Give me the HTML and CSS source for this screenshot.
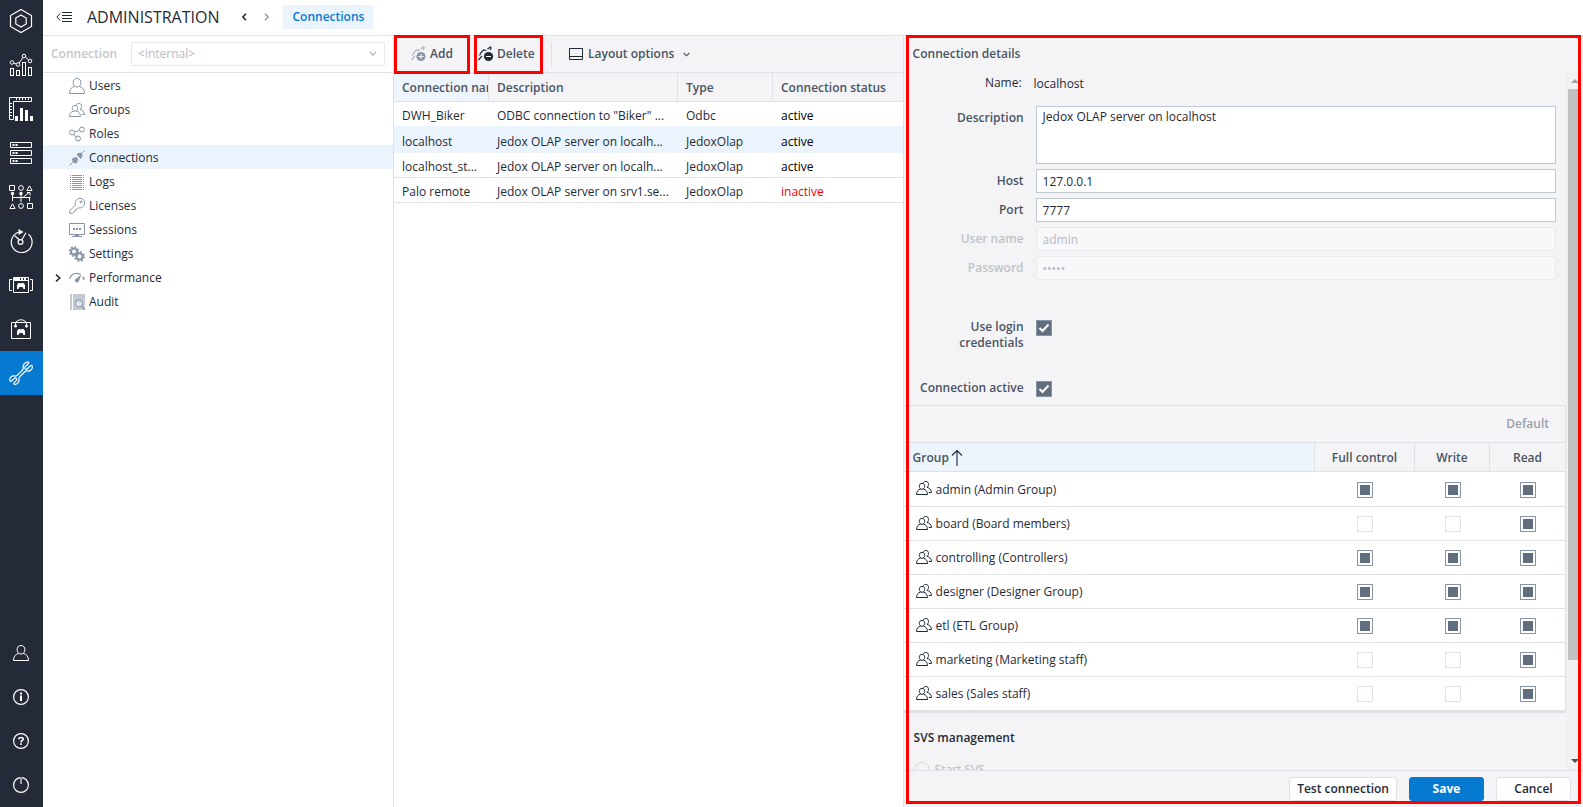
FILE: index.html
```html
<!DOCTYPE html>
<html lang="en">
<head>
<meta charset="utf-8">
<title>Administration - Connections</title>
<link rel="stylesheet" href="styles.css">
</head>
<body>
<svg class="defs" aria-hidden="true">
  <symbol id="i-group" viewBox="0 0 16 14">
    <g fill="none" stroke="currentColor" stroke-width="1">
      <path d="M6 2.400c2 0 2.700 1.300 2.700 2.900S7.700 8.300 6 8.300 3.300 6.900 3.300 5.300 4 2.400 6 2.400z"/>
      <path d="M4.600 8C2.200 8.700.6 10.300.5 13.500h11C11.400 10.300 9.800 8.700 7.400 8"/>
      <path d="M7.200 2.100C7.600 1 8.500.5 9.800.5c2 0 2.700 1.300 2.700 2.900 0 1.500-.6 2.500-1.600 2.900 2.500.7 4.400 2.200 4.600 5.200h-2.700"/>
    </g>
  </symbol>
  <symbol id="i-user" viewBox="0 0 16 16">
    <g fill="none" stroke="currentColor" stroke-width="1">
      <path d="M8 .5c2.600 0 3.900 1.800 3.900 4.200S10.400 9 8 9 4.100 7.100 4.100 4.700 5.400.5 8 .5z"/>
      <path d="M5.600 8.500C2.500 9.200.5 11.500.5 15.500h15c0-4-2-6.300-5.100-7"/>
    </g>
  </symbol>
  <symbol id="i-chev" viewBox="0 0 8 5"><path d="M.8.8 4 4 7.200.8" fill="none" stroke="currentColor" stroke-width="1.300"/></symbol>
</svg>
<div class="app">
  <nav class="rail" aria-label="Modules">
    <a class="rail-item first" href="#" aria-label="Home"><svg width="24" height="26" viewBox="0 0 24 26"><g fill="none" stroke="currentColor" stroke-width="1.200"><path d="M12 1.500 22.500 7.500v11L12 24.500 1.500 18.500v-11z"/><path d="M12 7 17.200 10v6L12 19 6.800 16v-6z"/></g></svg></a>
    <a class="rail-item" href="#" aria-label="Dashboards"><svg width="24" height="24" viewBox="0 0 24 24"><g fill="none" stroke="currentColor" stroke-width="1"><rect x="1.500" y="15.500" width="3" height="7"/><rect x="7.500" y="17.500" width="3" height="5"/><rect x="13.500" y="9.500" width="3" height="13"/><rect x="19.500" y="14.500" width="3" height="8"/><circle cx="3" cy="9.500" r="1.800"/><circle cx="9" cy="11.500" r="1.800"/><circle cx="15" cy="3" r="1.800"/><circle cx="21" cy="8" r="1.800"/><path d="M4.800 10.100l2.400.8M10 10l4-5.400M16.500 4.200l3 2.600"/></g></svg></a>
    <a class="rail-item" href="#" aria-label="Reports"><svg width="24" height="24" viewBox="0 0 24 24"><path d="M.5.500h22v4h-18v18h-4z" fill="none" stroke="currentColor"/><path d="M7.500 1v2M10.500 1v2M13.500 1v2M16.500 1v2M19.500 1v2M1 6.500h2M1 9.500h2M1 12.500h2M1 15.500h2M1 18.500h2" stroke="currentColor"/><path d="M6 19h3v5H6zM11 11h3v13h-3zM16 13h3v11h-3zM21 19h3v5h-3z" fill="currentColor"/></svg></a>
    <a class="rail-item" href="#" aria-label="Modeler"><svg width="24" height="24" viewBox="0 0 24 24"><g fill="none" stroke="currentColor"><path d="M1.500 1.500h21v5h-21zM1.500 9.500h21v5h-21zM1.500 17.500h21v5h-21z"/><path d="M3.500 4h2M6.500 4h2M3.500 12h2M6.500 12h2M3.500 20h2M6.500 20h2" stroke-width="2"/></g></svg></a>
    <a class="rail-item" href="#" aria-label="Integrator"><svg width="24" height="24" viewBox="0 0 24 24"><g fill="none" stroke="currentColor"><path d="M.5.500h5v5h-5zM18.500 18.500h5v5h-5zM20.500.8l2.600 4.700h-5.200zM3.500 18.800l2.600 4.700H.9z"/><circle cx="12" cy="3" r="2.400"/><circle cx="12" cy="21" r="2.400"/><path d="M3.500 7v9M12 7v10M4 12.500h17.500M20.500 12.500v4M14 12.500l6-5"/><path d="M18 7.500h3v3" /></g><g fill="currentColor"><circle cx="3.500" cy="8.500" r="1.700"/><circle cx="12" cy="8.500" r="1.700"/></g></svg></a>
    <a class="rail-item" href="#" aria-label="Scheduler"><svg width="24" height="24" viewBox="0 0 24 24"><g fill="none" stroke="currentColor" stroke-width="1.200"><path d="M19.500 5.300A10.400 10.400 0 1 1 10.500 3"/><circle cx="11.500" cy="13" r="2.400"/><path d="M10.300 10.800 5.500 6.500M12.800 10.800l4.200-7"/></g><path d="M9.500 0l5 3-5 3z" fill="currentColor"/></svg></a>
    <a class="rail-item" href="#" aria-label="Marketplace"><svg width="24" height="18" viewBox="0 0 24 18"><g fill="none" stroke="currentColor"><path d="M4.500 1.500h15v15h-15zM4.500 4.500h15"/><path d="M3 3.500H.5v11H3M21 3.500h2.500v11H21"/></g><path d="M5 2h6v2H5zM12 2h2v2h-2zM15 2h2v2h-2zM8 13V9l1.500-2h2l.5 1 .5-1h2L16 9v4h-1.500l-1-2h-3l-1 2z" fill="currentColor"/></svg></a>
    <a class="rail-item" href="#" aria-label="Store"><svg width="22" height="22" viewBox="0 0 22 22"><g fill="none" stroke="currentColor"><path d="M1.500 4.500h19v16h-19z"/><path d="M5.500 8V6c0-5.600 11-5.600 11 0v2"/></g><g fill="currentColor"><circle cx="5.500" cy="8" r="1.500"/><circle cx="16.500" cy="8" r="1.500"/><path d="M7 17v-4l1.500-2h2l.5 1 .5-1h2L15 13v4h-1.500l-1-2h-3l-1 2z"/></g></svg></a>
    <a class="rail-item active" href="#" aria-label="Administration" aria-current="page"><svg width="24" height="24" viewBox="0 0 24 24"><path d="M18.500 3.500l-2.400 2.400c-1 1 .9 3.300 2.100 2.100l3.300-3.500c1.700-.3 1.800.5 1.800 1.700 0 2.700-2.500 4.300-5.200 3.800-1.200-.2-1.800.2-2.600 1l-4.600 4.600c-.8.800-1.200 1.400-.9 2.600.6 2.600-1.100 5.100-3.800 5.100-1.500 0-1.700-1-1-1.700l2.300-2.300c1-1-1-3.200-2.200-2L3 19.700c-1.400 1.400-2.200.3-2.200-1C.8 16 3.300 14.400 5.900 15c1.200.3 1.800 0 2.600-.8l4.800-4.800c.8-.8 1.100-1.500.9-2.600C13.700 3.900 15.700 1 18.700 1c1.300 0 1.500.9-.2 2.500z" fill="none" stroke="currentColor" stroke-width="1.200"/></svg></a>
    <span class="rail-space"></span>
    <a class="rail-item" href="#" aria-label="Profile"><svg width="16" height="16"><use href="#i-user"/></svg></a>
    <a class="rail-item" href="#" aria-label="Information"><svg width="16" height="16" viewBox="0 0 16 16"><circle cx="8" cy="8" r="7.400" fill="none" stroke="currentColor" stroke-width="1.200"/><path d="M7 3.500h2v2H7zM7 6.500h2V12H7z" fill="currentColor"/></svg></a>
    <a class="rail-item" href="#" aria-label="Help"><svg width="16" height="16" viewBox="0 0 16 16"><circle cx="8" cy="8" r="7.400" fill="none" stroke="currentColor" stroke-width="1.200"/><path d="M5.800 6.200C5.800 3.900 10.400 4 10.200 6.200 10.100 7.500 8 7.500 8 9.400M8 10.300V12" fill="none" stroke="currentColor" stroke-width="1.600"/></svg></a>
    <a class="rail-item" href="#" aria-label="Log out"><svg width="16" height="16" viewBox="0 0 16 16"><circle cx="8" cy="8" r="7.400" fill="none" stroke="currentColor" stroke-width="1.200"/><path d="M8 0v7" stroke="#9ba0a8" stroke-width="2"/></svg></a>
  </nav>

  <div class="main">
    <header class="topbar">
      <button class="icon-btn menu" aria-label="Collapse menu"><svg width="16" height="12" viewBox="0 0 16 12"><path d="M6 1.500h10M6 4.500h10M6 7.500h10M6 10.500h10M4.200 2.500.9 6l3.300 3.500" fill="none" stroke="currentColor"/></svg></button>
      <h1>ADMINISTRATION</h1>
      <button class="icon-btn back" aria-label="Back"><svg width="5" height="8" viewBox="0 0 5 8"><path d="M4 .8.9 4 4 7.200" fill="none" stroke="currentColor" stroke-width="1.500"/></svg></button>
      <button class="icon-btn fwd" aria-label="Forward"><svg width="5" height="8" viewBox="0 0 5 8"><path d="M1 .8 4.100 4 1 7.200" fill="none" stroke="currentColor" stroke-width="1.300"/></svg></button>
      <a class="crumb" href="#">Connections</a>
    </header>

    <div class="content">
      <aside class="tree-panel">
        <div class="conn-bar">
          <label for="conn">Connection</label>
          <span class="select-wrap">
            <select id="conn" disabled><option>&lt;internal&gt;</option></select>
            <svg width="8" height="5"><use href="#i-chev"/></svg>
          </span>
        </div>
        <ul class="tree">
          <li><a href="#"><svg width="16" height="16"><use href="#i-user"/></svg>Users</a></li>
          <li><a href="#"><svg width="16" height="14"><use href="#i-group"/></svg>Groups</a></li>
          <li><a href="#"><svg width="16" height="16" viewBox="0 0 16 16"><g fill="none" stroke="currentColor"><circle cx="3" cy="6.500" r="2.500"/><circle cx="13" cy="3.500" r="2.500"/><circle cx="9" cy="12.500" r="2.500"/><path d="M5.500 6l5-1.600M4.500 8.500l2.800 2.400"/></g></svg>Roles</a></li>
          <li class="selected"><a href="#"><svg width="16" height="16" viewBox="0 0 16 16"><path d="M.5 15.500 6 10M10 6 15.500.5" stroke="currentColor"/><path d="M3 9l2-2 .8 1L7 6.800l2.300 2.300L8.200 10.300l.8.700-1.800 2.200-1.400.3-2.600-2.700zM7.500 4.500l2-1.500 2-.5 2 2-.3 2.200L11.700 9z" fill="currentColor"/></svg>Connections</a></li>
          <li><a href="#"><svg width="16" height="16" viewBox="0 0 16 16"><path d="M3 1.500h10M3 3.500h10M3 5.500h10M3 7.500h10M3 9.500h10M3 11.500h10M3 13.500h10M3 15.500h10M1 1.500h1M1 3.500h1M1 5.500h1M1 7.500h1M1 9.500h1M1 11.500h1M1 13.500h1M1 15.500h1M14 1.500h1M14 3.500h1M14 5.500h1M14 7.500h1M14 9.500h1M14 11.500h1M14 13.500h1M14 15.500h1" stroke="currentColor"/></svg>Logs</a></li>
          <li><a href="#"><svg width="16" height="16" viewBox="0 0 16 16"><g fill="none" stroke="currentColor"><path d="M6.500 7C5.400 3.500 7.500.5 11 .5s4.500 2 4.500 4.500c0 3.500-3 5.500-6 4.800L8 11.200l-1.500.3-.3 1.500L3.500 15.200l-2.700.3L.5 13z"/><circle cx="12" cy="4" r="1"/></g></svg>Licenses</a></li>
          <li><a href="#"><svg width="16" height="16" viewBox="0 0 16 16"><path d="M.5 1.500h15v11H.5z" fill="none" stroke="currentColor"/><path d="M4 6h2v2H4zM7 6h2v2H7zM10 6h2v2h-2zM6 13h4v1H6zM3 14h10v1H3z" fill="currentColor"/></svg>Sessions</a></li>
          <li><a href="#"><svg width="16" height="16" viewBox="0 0 16 16"><g fill="none" stroke="currentColor"><circle cx="5" cy="5.500" r="3" stroke-width="2"/><circle cx="5" cy="5.500" r="4.600" stroke-width="1.600" stroke-dasharray="1.800 1.800"/><circle cx="10.500" cy="10.500" r="3" stroke-width="2.200"/><circle cx="10.500" cy="10.500" r="4.700" stroke-width="1.600" stroke-dasharray="1.850 1.850"/></g></svg>Settings</a></li>
          <li><a href="#" class="expandable"><svg class="twist" width="6" height="8" viewBox="0 0 6 8"><path d="M1 .6 4.800 4 1 7.400" fill="none" stroke="currentColor" stroke-width="1.500"/></svg><svg width="16" height="16" viewBox="0 0 16 16"><path d="M.7 9C1.500 5.200 4.200 3.300 7.500 3.300c1.700 0 3 .5 4 1.200" fill="none" stroke="currentColor" stroke-width="1.200"/><path d="M12.500 4.500 9.800 11.200a2 2 0 1 1-3.200-2.300zM14 6c1 1 1.700 2 2 3.500h-2.500z" fill="currentColor"/></svg>Performance</a></li>
          <li><a href="#"><svg width="16" height="16" viewBox="0 0 16 16"><path d="M1 0h2v16H1zM4 0h12v16H4z" fill="#c3cad3"/><circle cx="10" cy="9.500" r="3.600" fill="#dfe3e8" stroke="#8795a6"/><path d="M12.500 12.200 15.500 15.500" stroke="#8795a6" stroke-width="1.300"/></svg>Audit</a></li>
        </ul>
      </aside>

      <section class="list-panel">
        <div class="toolbar">
          <button class="tool marked add"><svg width="16" height="16" viewBox="0 0 16 16"><g fill="none" stroke="#8795a6"><path d="M.5 14 4 9.800M1.500 9.500c1-2.500 2-4 4-5.500l3 .5M9.500 3 13 .5M12 4l1.500-2.500"/></g><circle cx="10" cy="10.500" r="4.500" fill="#8795a6"/><path d="M10 8v5M7.500 10.500h5" stroke="#fff"/></svg>Add</button>
          <button class="tool marked del"><svg width="16" height="16" viewBox="0 0 16 16"><g fill="none" stroke="#1f2a38" stroke-width="1.200"><path d="M.5 14 4 9.800M1.500 9.500c1-2.500 2-4 4-5.500l3 .5M9.500 3 13 .5M12 4l1.500-2.500"/></g><circle cx="10.500" cy="10.500" r="4.600" fill="#1f2a38"/><path d="M8 10.500h5" stroke="#fff"/></svg>Delete</button>
          <span class="sep"></span>
          <button class="tool layout"><svg width="14" height="12" viewBox="0 0 14 12"><path d="M.5.500h13v11H.5zM.5 8.500h13" fill="none" stroke="#1f2a38" stroke-width="1"/></svg>Layout options<svg class="caret" width="7" height="5"><use href="#i-chev"/></svg></button>
        </div>
        <table class="conns">
          <colgroup><col class="c-name"><col class="c-desc"><col class="c-type"><col></colgroup>
          <thead><tr><th class="sorted">Connection name</th><th>Description</th><th>Type</th><th>Connection status</th></tr></thead>
          <tbody>
            <tr><td>DWH_Biker</td><td>ODBC connection to "Biker" ...</td><td>Odbc</td><td class="st">active</td></tr>
            <tr class="selected"><td>localhost</td><td>Jedox OLAP server on localh...</td><td>JedoxOlap</td><td class="st">active</td></tr>
            <tr><td>localhost_st...</td><td>Jedox OLAP server on localh...</td><td>JedoxOlap</td><td class="st">active</td></tr>
            <tr><td>Palo remote</td><td>Jedox OLAP server on srv1.se...</td><td>JedoxOlap</td><td class="st off">inactive</td></tr>
          </tbody>
        </table>
      </section>

      <section class="details">
        <h2>Connection details</h2>
        <div class="scroller">
          <div class="details-body">
            <div class="form">
              <span class="plain">Name:</span><output class="value">localhost</output>
              <label for="desc">Description</label><textarea id="desc">Jedox OLAP server on localhost</textarea>
              <label for="host">Host</label><input id="host" type="text" value="127.0.0.1">
              <label for="port">Port</label><input id="port" type="text" value="7777">
              <label for="user" class="off">User name</label><input id="user" type="text" value="admin" disabled>
              <label for="pass" class="off">Password</label><input id="pass" type="password" value="admin" disabled>
              <label for="login" class="login">Use login credentials</label><span class="tick login"><input id="login" type="checkbox" checked><svg width="12" height="10" viewBox="0 0 12 10"><path d="M1.500 5 4.500 8 10.500 1.500" fill="none" stroke="#fff" stroke-width="2"/></svg></span>
              <label for="actv" class="actv">Connection active</label><span class="tick actv"><input id="actv" type="checkbox" checked><svg width="12" height="10" viewBox="0 0 12 10"><path d="M1.500 5 4.500 8 10.500 1.500" fill="none" stroke="#fff" stroke-width="2"/></svg></span>
            </div>
            <div class="rights-bar"><button disabled>Default</button></div>
            <table class="rights">
              <colgroup><col><col class="c-full"><col class="c-write"><col class="c-read"></colgroup>
              <thead><tr><th class="sorted"><span>Group<svg width="12" height="18" viewBox="0 0 12 18"><path d="M6 1.500V17M1 6.500l5-5 5 5" fill="none" stroke="#1f2a38" stroke-width="1.100"/></svg></span></th><th>Full control</th><th>Write</th><th>Read</th></tr></thead>
              <tbody>
                <tr><td><span><svg width="16" height="14"><use href="#i-group"/></svg>admin (Admin Group)</span></td><td><input type="checkbox" aria-label="admin full control" checked></td><td><input type="checkbox" aria-label="admin write" checked></td><td><input type="checkbox" aria-label="admin read" checked></td></tr>
                <tr><td><span><svg width="16" height="14"><use href="#i-group"/></svg>board (Board members)</span></td><td><input type="checkbox" aria-label="board full control"></td><td><input type="checkbox" aria-label="board write"></td><td><input type="checkbox" aria-label="board read" checked></td></tr>
                <tr><td><span><svg width="16" height="14"><use href="#i-group"/></svg>controlling (Controllers)</span></td><td><input type="checkbox" aria-label="controlling full control" checked></td><td><input type="checkbox" aria-label="controlling write" checked></td><td><input type="checkbox" aria-label="controlling read" checked></td></tr>
                <tr><td><span><svg width="16" height="14"><use href="#i-group"/></svg>designer (Designer Group)</span></td><td><input type="checkbox" aria-label="designer full control" checked></td><td><input type="checkbox" aria-label="designer write" checked></td><td><input type="checkbox" aria-label="designer read" checked></td></tr>
                <tr><td><span><svg width="16" height="14"><use href="#i-group"/></svg>etl (ETL Group)</span></td><td><input type="checkbox" aria-label="etl full control" checked></td><td><input type="checkbox" aria-label="etl write" checked></td><td><input type="checkbox" aria-label="etl read" checked></td></tr>
                <tr><td><span><svg width="16" height="14"><use href="#i-group"/></svg>marketing (Marketing staff)</span></td><td><input type="checkbox" aria-label="marketing full control"></td><td><input type="checkbox" aria-label="marketing write"></td><td><input type="checkbox" aria-label="marketing read" checked></td></tr>
                <tr><td><span><svg width="16" height="14"><use href="#i-group"/></svg>sales (Sales staff)</span></td><td><input type="checkbox" aria-label="sales full control"></td><td><input type="checkbox" aria-label="sales write"></td><td><input type="checkbox" aria-label="sales read" checked></td></tr>
              </tbody>
            </table>
            <h3>SVS management</h3>
            <label class="radio"><input type="radio" name="svs" disabled>Start SVS</label>
          </div>
          <div class="scrollbar" aria-hidden="true">
            <svg width="8" height="4" viewBox="0 0 8 4"><path d="M0 4 4 0l4 4z" fill="#a3a3a3"/></svg>
            <span class="track"><span class="thumb"></span></span>
            <svg width="8" height="4" viewBox="0 0 8 4"><path d="M0 0l4 4 4-4z" fill="#505050"/></svg>
          </div>
        </div>
        <footer>
          <button class="btn test">Test connection</button>
          <button class="btn primary">Save</button>
          <button class="btn">Cancel</button>
        </footer>
      </section>
    </div>
  </div>
</div>
</body>
</html>
```

FILE: styles.css
```css
* { box-sizing: border-box; }

:root {
  --ink: #1f2a38;
  --label: #4a5564;
  --line: #dee1e6;
  --panel: #f4f4f7;
  --pick: #ebf4fc;
  --blue: #067ad1;
  --mark: #ff0000;
}

body {
  margin: 0;
  font: 12px/16px "Open Sans", sans-serif;
  color: var(--ink);
  background: #fff;
}

button, input, select, textarea { font: inherit; color: inherit; }
button { cursor: pointer; }
a { color: inherit; text-decoration: none; }
svg { flex: none; display: block; }
.defs { position: absolute; width: 0; height: 0; }

.app { display: flex; height: 100vh; overflow: hidden; }

/* module rail */
.rail {
  flex: none;
  width: 43px;
  display: flex;
  flex-direction: column;
  background: #242a37;
  color: #fff;
}
.rail-item {
  flex: none;
  height: 44px;
  display: flex;
  align-items: center;
  justify-content: center;
  padding-right: 1px;
}
.rail-item.first { height: 43px; padding-bottom: 1px; }
.rail-item.active { background: var(--blue); }
.rail-space { flex: 1; }

.main { flex: 1; min-width: 0; display: flex; flex-direction: column; }

/* top bar */
.topbar {
  flex: none;
  height: 36px;
  display: flex;
  align-items: center;
  padding: 0 13px 2px;
  border-bottom: 1px solid var(--line);
}
.icon-btn { display: flex; padding: 0; border: 0; background: none; }
h1 { margin: 0 23px 0 15px; font-size: 16px; line-height: 24px; font-weight: 400; }
.fwd { margin: 0 14px 0 17px; color: #8b929b; }
.crumb {
  padding: 4px 9px;
  background: var(--pick);
  color: var(--blue);
  font-weight: 600;
}

.content { flex: 1; min-height: 0; display: flex; }

/* tree */
.tree-panel { flex: none; width: 351px; border-right: 1px solid var(--line); }
.conn-bar {
  height: 37px;
  display: flex;
  align-items: center;
  gap: 14px;
  padding: 0 8px;
  border-bottom: 1px solid var(--line);
}
.conn-bar label { color: #c3c6cb; font-weight: 600; }
.select-wrap { position: relative; flex: 1; color: #b5b9bf; }
.select-wrap select {
  width: 100%;
  height: 24px;
  padding: 0 6px;
  appearance: none;
  border: 1px solid #e8eaee;
  border-radius: 0;
  background: #fff;
  color: #b5b9bf;
  opacity: 1;
}
.select-wrap svg { position: absolute; right: 8px; top: 9px; }
.tree { margin: 0; padding: 0; list-style: none; }
.tree a { height: 24px; display: flex; align-items: center; gap: 4px; padding: 2px 0 0 26px; }
.tree a svg { color: #8795a6; }
.tree .expandable { padding-left: 12px; }
.tree .expandable .twist { margin-right: 4px; color: var(--ink); }
.tree .selected { background: var(--pick); }

/* connection list */
.list-panel { flex: 509 1 0; min-width: 0; border-right: 1px solid var(--line); }
.toolbar {
  height: 37px;
  display: flex;
  align-items: center;
  background: var(--panel);
  border-bottom: 1px solid var(--line);
}
.tool {
  position: relative;
  height: 36px;
  display: flex;
  align-items: center;
  gap: 3px;
  padding: 0;
  border: 0;
  background: none;
  color: var(--label);
  font-weight: 600;
}
.add { width: 76px; padding-left: 17px; }
.del { width: 69px; margin-left: 4px; padding-left: 4px; }
.marked::after {
  content: "";
  position: absolute;
  inset: -1px 0 -2px;
  border: 3px solid var(--mark);
}
.sep { width: 1px; height: 24px; margin: 0 17px 0 8px; background: var(--line); }
.layout { gap: 5px; }
.caret { margin-left: 4px; }

table { border-collapse: separate; border-spacing: 0; width: 100%; table-layout: fixed; }
th { color: var(--label); font-weight: 600; text-align: left; background: var(--panel); }
th.sorted { background: #edf4fb; }
.conns th, .conns td {
  padding: 2px 8px 0;
  overflow: hidden;
  white-space: nowrap;
  border-bottom: 1px solid var(--line);
}
.conns th { height: 29px; border-right: 1px solid var(--line); }
.conns th.sorted { padding-right: 0; }
.conns th:last-child { border-right: 0; }
.conns td { height: 25px; padding-top: 4px; }
.conns td + td { padding-right: 0; }
.conns tr:first-child td { border-color: var(--pick); }
.conns .selected td { height: 26px; background: var(--pick); border-color: var(--pick); }
.conns .st { color: #000; }
.conns .st.off { color: var(--mark); }
.c-name { width: 95px; }
.c-desc { width: 189px; }
.c-type { width: 95px; }

/* details */
.details {
  position: relative;
  flex: 680 1 0;
  min-width: 0;
  display: flex;
  flex-direction: column;
  background: var(--panel);
}
.details::after {
  content: "";
  position: absolute;
  inset: -1px 2px 3px 2px;
  border: 3px solid var(--mark);
  pointer-events: none;
}
h2 {
  flex: none;
  margin: 0;
  padding: 10px 9px;
  font-size: 12px;
  line-height: 16px;
  font-weight: 600;
  color: var(--label);
}
.scroller { flex: 1; min-height: 0; display: flex; }
.details-body { flex: 1; min-width: 0; overflow: hidden; }
.form {
  display: grid;
  grid-template-columns: 112px 1fr;
  column-gap: 12px;
  row-gap: 5px;
  padding: 0 10px 8px 8px;
}
.form label, .form .plain { text-align: right; }
.form label { padding-top: 4px; color: var(--label); font-weight: 600; }
.form label.off { color: #c0c3c9; }
.form .plain { padding: 3px 2px 0 0; height: 29px; }
.form .value { padding-top: 4px; margin-left: -2px; }
.form textarea, .form input[type="text"], .form input[type="password"] {
  width: 100%;
  height: 24px;
  margin: 0;
  padding: 0 6px;
  border: 1px solid #c0c9d2;
  border-radius: 0;
  background: #fff;
  outline: 0;
}
.form textarea { height: 58px; padding: 2px 6px; display: block; resize: none; }
.form input:disabled { border-color: #e8eaee; background: #f8f8fb; color: #b5b9bf; }
.form .login { margin-top: 35px; }
.form .actv { margin-top: 24px; }
.form label.login { margin-top: 34px; padding: 0 0 1px; }
.form label.actv { margin-top: 23px; padding: 0; }
.tick { position: relative; }
.tick input {
  appearance: none;
  display: block;
  width: 16px;
  height: 16px;
  margin: 0;
  border: 1px solid #8795a6;
  background: #616e7e;
}
.tick svg { position: absolute; left: 2px; top: 3px; pointer-events: none; }

.rights-bar {
  height: 37px;
  display: flex;
  align-items: center;
  justify-content: flex-end;
  padding-right: 16px;
  border-top: 1px solid var(--line);
  border-right: 1px solid var(--line);
}
.rights-bar button { padding: 0; border: 0; background: none; color: #9a9fa8; font-weight: 600; }
.rights { border-top: 1px solid var(--line); border-right: 1px solid var(--line); border-bottom: 2px solid var(--line); }
.rights th { height: 29px; padding: 2px 0 0; text-align: center; border-bottom: 1px solid var(--line); border-left: 1px solid var(--line); }
.rights th.sorted { padding-left: 9px; border-left: 0; text-align: left; }
.rights td { height: 34px; padding: 1px 0 0 2px; background: #fff; border-bottom: 1px solid var(--line); text-align: center; }
.rights tr:first-child td { height: 35px; }
.rights td:first-child { padding-left: 12px; }
.rights span { display: flex; align-items: center; gap: 4px; }
.rights th span { gap: 2px; }
.rights td svg { margin-bottom: 3px; }
.rights input {
  appearance: none;
  display: block;
  width: 16px;
  height: 16px;
  margin: 0 auto;
  border: 1px solid var(--line);
  background: #fff;
}
.rights input:checked { border-color: #8795a6; background: #616e7e; box-shadow: inset 0 0 0 2px #fff; }
.c-full { width: 100px; }
.c-write { width: 75px; }
.c-read { width: 76px; }
h3 { margin: 17px 0 0 10px; font-size: 12px; line-height: 16px; font-weight: 600; }
.radio { display: flex; align-items: center; gap: 5px; margin: 16px 0 0 10px; color: #b5b9bf; }
.radio input { appearance: none; width: 16px; height: 16px; margin: 0; border: 1px solid #d6d9de; border-radius: 50%; }

.scrollbar {
  flex: none;
  width: 17px;
  display: flex;
  flex-direction: column;
  align-items: center;
  padding: 7px 0;
  gap: 6px;
  background: #f1f1f1;
}
.track { flex: 1; align-self: stretch; padding: 0 2px; }
.thumb { display: block; height: 86%; background: #c1c1c1; }

footer {
  flex: none;
  height: 37px;
  display: flex;
  justify-content: flex-end;
  gap: 12px;
  padding: 6px 12px;
  border-top: 1px solid var(--line);
}
.btn {
  height: 24px;
  min-width: 75px;
  padding: 0 7px;
  border: 1px solid var(--line);
  border-radius: 3px;
  background: #fff;
  font-weight: 600;
}
.btn.primary { border-color: var(--blue); background: var(--blue); color: #fff; font-weight: 700; }
```
